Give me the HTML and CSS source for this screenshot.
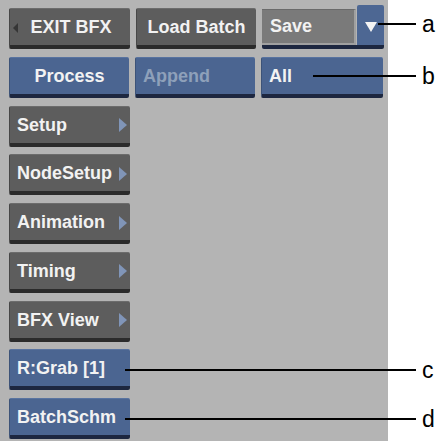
FILE: index.html
```html
<!DOCTYPE html>
<html>
<head>
<meta charset="utf-8">
<link rel="stylesheet" href="styles.css">
</head>
<body>
<div class="page">
  <div class="panel">
    <div class="row">
      <div class="btn gray exit"><span class="larrow"></span><span class="lbl">EXIT BFX</span></div>
      <div class="btn gray center">Load Batch</div>
      <div class="combo">
        <div class="field">Save</div>
        <div class="drop"><span class="darrow"></span></div>
      </div>
    </div>
    <div class="row">
      <div class="btn blue center">Process</div>
      <div class="btn blue dim">Append</div>
      <div class="btn blue wide">All</div>
    </div>
    <div class="btn gray menu">Setup<span class="rarrow"></span></div>
    <div class="btn gray menu">NodeSetup<span class="rarrow"></span></div>
    <div class="btn gray menu">Animation<span class="rarrow"></span></div>
    <div class="btn gray menu">Timing<span class="rarrow"></span></div>
    <div class="btn gray menu">BFX View<span class="rarrow"></span></div>
    <div class="btn blue menu">R:Grab [1]</div>
    <div class="btn blue menu">BatchSchm</div>
  </div>
  <div class="callout ca"><span class="line"></span><span class="tag">a</span></div>
  <div class="callout cb"><span class="line"></span><span class="tag">b</span></div>
  <div class="callout cc"><span class="line"></span><span class="tag">c</span></div>
  <div class="callout cd"><span class="line"></span><span class="tag">d</span></div>
</div>
</body>
</html>
```

FILE: styles.css
```css
html, body {
  margin: 0;
  padding: 0;
  background: #ffffff;
}
.page {
  position: relative;
  width: 438px;
  height: 441px;
  overflow: hidden;
  background: #ffffff;
}
.panel {
  width: 388px;
  height: 441px;
  box-sizing: border-box;
  background: #b4b4b4;
  padding: 8px 0 0 9px;
  display: flex;
  flex-direction: column;
  gap: 7.75px;
}
.row {
  display: flex;
  gap: 6px;
}
.btn {
  width: 121px;
  height: 41px;
  box-sizing: border-box;
  border-radius: 2px;
  display: flex;
  align-items: center;
  font-family: "Liberation Sans", Arial, sans-serif;
  font-weight: bold;
  font-size: 18px;
  color: #f2f2f2;
  padding-top: 1px;
}
.gray {
  background: #5d5d5d;
  border-top: 1px solid #6c6c6c;
  border-left: 1px solid #474747;
  border-bottom: 4px solid #2b2b2b;
}
.blue {
  background: #4b6591;
  border-top: 1px solid #5873a0;
  border-left: 1px solid #3d5378;
  border-bottom: 4px solid #1d2740;
}
.center {
  justify-content: center;
  width: 120px;
}
.exit {
  position: relative;
  justify-content: center;
}
.exit .lbl {
  margin-left: 2px;
}
.larrow {
  position: absolute;
  left: 3px;
  top: 14px;
  width: 0;
  height: 0;
  border-top: 5px solid transparent;
  border-bottom: 5px solid transparent;
  border-right: 5px solid #363636;
}
.dim {
  width: 120px;
  padding-left: 7px;
  color: #8ea0ba;
}
.wide {
  width: 122px;
  padding-left: 7px;
}
.combo {
  display: flex;
  width: 122px;
  height: 41px;
  gap: 1px;
  border-bottom: 4px solid #1d2740;
  box-sizing: border-box;
  border-radius: 0 0 2px 2px;
}
.field {
  flex: 1;
  margin-top: 1px;
  box-sizing: border-box;
  background: #7a7a7a;
  border-right: 2px solid #a0a0a0;
  border-bottom: 2px solid #a0a0a0;
  border-top: 1px solid #6a6a6a;
  padding-left: 8px;
  display: flex;
  align-items: center;
  font-family: "Liberation Sans", Arial, sans-serif;
  font-weight: bold;
  font-size: 18px;
  color: #f2f2f2;
}
.drop {
  width: 27px;
  margin-top: -3px;
  background: #4d6793;
  border-radius: 2px 2px 0 0;
  display: flex;
  align-items: center;
  justify-content: center;
}
.darrow {
  width: 0;
  height: 0;
  margin-top: 4px;
  border-left: 6px solid transparent;
  border-right: 6px solid transparent;
  border-top: 10px solid #f4f4f4;
}
.menu {
  justify-content: space-between;
  padding-left: 7px;
  padding-right: 3px;
}
.rarrow {
  width: 0;
  height: 0;
  border-top: 7px solid transparent;
  border-bottom: 7px solid transparent;
  border-left: 8px solid #8095b8;
}
.callout {
  position: absolute;
  right: 0;
  display: flex;
  align-items: center;
  height: 24px;
}
.line {
  height: 2px;
  background: #000000;
}
.tag {
  width: 22px;
  padding-left: 6px;
  box-sizing: border-box;
  font-family: "Liberation Sans", Arial, sans-serif;
  font-size: 23px;
  color: #000000;
  line-height: 24px;
}
.ca { top: 12px; }
.ca .line { width: 38px; }
.cb { top: 64px; }
.cb .line { width: 103px; }
.cc { top: 358px; }
.cc .line { width: 291px; }
.cd { top: 407px; }
.cd .line { width: 291px; }
```
